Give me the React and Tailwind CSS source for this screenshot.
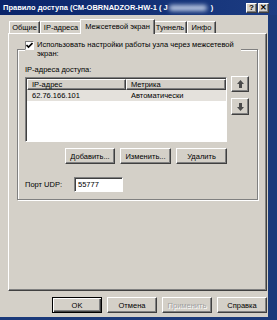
const face = "bg-[#d4d0c8]";
const btn =
  "flex items-center justify-center border border-t-white border-l-white border-r-[#404040] border-b-[#404040] shadow-[inset_-1px_-1px_0_#808080] bg-[#d4d0c8]";

function Button({ children, className = "", disabled }) {
  return (
    <div className={`${btn} h-[16px] w-[50px] ${disabled ? "text-[#a0a0a0]" : "text-black"} ${className}`}>
      {children}
    </div>
  );
}

function Tab({ label, width, active }) {
  if (active) {
    return (
      <div
        className={`relative z-10 -mb-px -mx-[2px] h-[15px] ${face} border-t border-l border-white border-r border-r-[#404040] shadow-[inset_-1px_0_0_#808080] flex items-start justify-center pt-[2px]`}
        style={{ width }}
      >
        {label}
      </div>
    );
  }
  return (
    <div
      className={`h-[12px] ${face} border-t border-l border-white border-r border-r-[#404040] shadow-[inset_-1px_0_0_#808080] flex items-center justify-center`}
      style={{ width }}
    >
      {label}
    </div>
  );
}

function Arrow({ up }) {
  return (
    <svg width="7" height="8" viewBox="0 0 7 8">
      {up ? (
        <path d="M3.5 0 L7 4 L5 4 L5 8 L2 8 L2 4 L0 4 Z" fill="#4a4a4a" />
      ) : (
        <path d="M3.5 8 L7 4 L5 4 L5 0 L2 0 L2 4 L0 4 Z" fill="#4a4a4a" />
      )}
    </svg>
  );
}

export default function App() {
  return (
    <div
      className="w-[277px] h-[320px] flex flex-col bg-[#1b3a7a] overflow-hidden text-[7.5px] leading-[9px] text-black"
      style={{ fontFamily: '"Liberation Sans", Arial, sans-serif' }}
    >
      {/* title bar */}
      <div className="h-[15px] flex items-center bg-gradient-to-r from-[#0a246a] to-[#1c3c82] pl-[3px] pr-[8px]">
        <div className="flex-1 flex items-center text-white font-bold text-[7.5px] whitespace-nowrap">
          <span>Правило доступа (CM-OBRNADZOR-HW-1 ( J</span>
          <span className="ml-[1px] w-[38px] h-[6px] rounded-full bg-[#b8c6e0] blur-[2px]"></span>
          <span className="ml-[4px]">)</span>
        </div>
        <div className={`${btn} w-[11px] h-[10px] text-[8px] font-bold`}>?</div>
        <div className={`${btn} ml-[1px] w-[11px] h-[10px] text-[8px] font-bold`}>✕</div>
      </div>

      <div className="flex-1 flex">
        <div className={`w-[268px] ${face} flex flex-col`}>
          {/* tabs */}
          <div className="h-[18px] flex items-end pl-[9px]">
            <Tab label="Общие" width={31} />
            <Tab label="IP-адреса" width={42} />
            <Tab label="Межсетевой экран" width={75} active />
            <Tab label="Туннель" width={34} />
            <Tab label="Инфо" width={29} />
          </div>

          {/* tab panel */}
          <div className="ml-[8px] w-[259px] h-[258px] border border-t-white border-l-white border-r-[#404040] border-b-[#404040] shadow-[inset_-1px_-1px_0_#808080] pl-[8px] pt-[6px]">
            <fieldset className="w-[241px] h-[160px] border border-[#808080] shadow-[inset_1px_1px_0_#fff,1px_1px_0_#fff] px-[7px] pb-0 m-0">
              <legend className={`${face} w-[216px] flex items-start gap-[3px] pr-[2px] p-0`}>
                <span className="mt-[1px] w-[9px] h-[9px] shrink-0 bg-white border border-t-[#808080] border-l-[#808080] border-r-white border-b-white flex items-center justify-center">
                  <svg width="7" height="7" viewBox="0 0 7 7">
                    <path d="M0.5 3 L2.5 5 L6.5 1" stroke="#000" strokeWidth="1.6" fill="none" />
                  </svg>
                </span>
                <span>Использовать настройки работы узла через межсетевой экран:</span>
              </legend>

              <div className="mt-[7px]">IP-адреса доступа:</div>

              <div className="mt-[3px] flex items-start gap-[4px]">
                <div className="w-[202px] h-[65px] bg-white border border-t-[#808080] border-l-[#808080] border-r-white border-b-white shadow-[inset_1px_1px_0_#404040]">
                  <div className="flex h-[11px] mt-px ml-px">
                    <div className={`${btn} w-[99px] h-[11px] justify-start pl-[4px]`}>IP-адрес</div>
                    <div className={`${btn} flex-1 h-[11px] justify-start pl-[4px]`}>Метрика</div>
                  </div>
                  <div className="flex h-[11px] ml-px bg-[#e4e1dc] items-center">
                    <div className="w-[99px] pl-[5px]">62.76.166.101</div>
                    <div className="pl-[5px]">Автоматически</div>
                  </div>
                </div>
                <div className="flex flex-col gap-[6px] -mt-px">
                  <div className={`${btn} w-[18px] h-[16px]`}>
                    <Arrow up />
                  </div>
                  <div className={`${btn} w-[18px] h-[17px]`}>
                    <Arrow />
                  </div>
                </div>
              </div>

              <div className="w-[202px] mt-[6px] flex justify-end gap-[5px]">
                <Button>Добавить...</Button>
                <Button className="w-[51px]">Изменить...</Button>
                <Button className="w-[51px]">Удалить</Button>
              </div>

              <div className="mt-[13px] flex items-center">
                <div className="w-[49px]">Порт UDP:</div>
                <div className="w-[49px] h-[15px] bg-white border border-t-[#808080] border-l-[#808080] border-r-white border-b-white shadow-[inset_1px_1px_0_#404040] pl-[3px] pt-[2px]">
                  55777
                </div>
              </div>
            </fieldset>
          </div>

          {/* bottom buttons */}
          <div className="mt-[6px] flex justify-end gap-[5px] pr-px">
            <div className="h-[16px] w-[50px] flex items-center justify-center border border-black shadow-[inset_1px_1px_0_#fff,inset_-1px_-1px_0_#404040,inset_-2px_-2px_0_#808080] bg-[#d4d0c8]">
              OK
            </div>
            <Button>Отмена</Button>
            <Button disabled className="[text-shadow:1px_1px_0_#fff]">Применить</Button>
            <Button>Справка</Button>
          </div>
        </div>
      </div>
      <div className="h-[3px]"></div>
    </div>
  );
}
